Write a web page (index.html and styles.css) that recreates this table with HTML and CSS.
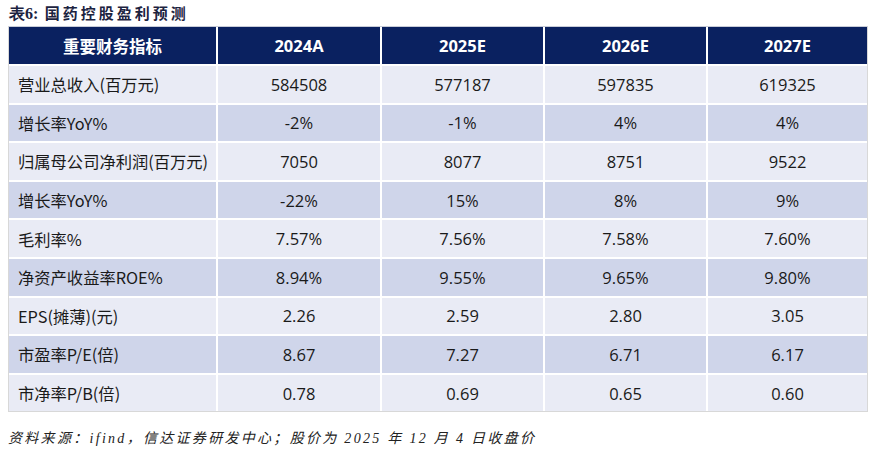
FILE: index.html
```html
<!DOCTYPE html>
<html lang="zh">
<head>
<meta charset="utf-8">
<link rel="stylesheet" href="styles.css">
</head>
<body>
<div class="title"><span class="latin">表6:</span> 国药控股盈利预测</div>
<div class="table">
  <div class="cell head">重要财务指标</div>
  <div class="cell head">2024A</div>
  <div class="cell head">2025E</div>
  <div class="cell head">2026E</div>
  <div class="cell head">2027E</div>

  <div class="cell lbl odd">营业总收入(百万元)</div>
  <div class="cell odd">584508</div><div class="cell odd">577187</div><div class="cell odd">597835</div><div class="cell odd">619325</div>

  <div class="cell lbl even">增长率YoY%</div>
  <div class="cell even">-2%</div><div class="cell even">-1%</div><div class="cell even">4%</div><div class="cell even">4%</div>

  <div class="cell lbl odd">归属母公司净利润(百万元)</div>
  <div class="cell odd">7050</div><div class="cell odd">8077</div><div class="cell odd">8751</div><div class="cell odd">9522</div>

  <div class="cell lbl even">增长率YoY%</div>
  <div class="cell even">-22%</div><div class="cell even">15%</div><div class="cell even">8%</div><div class="cell even">9%</div>

  <div class="cell lbl odd">毛利率%</div>
  <div class="cell odd">7.57%</div><div class="cell odd">7.56%</div><div class="cell odd">7.58%</div><div class="cell odd">7.60%</div>

  <div class="cell lbl even">净资产收益率ROE%</div>
  <div class="cell even">8.94%</div><div class="cell even">9.55%</div><div class="cell even">9.65%</div><div class="cell even">9.80%</div>

  <div class="cell lbl odd">EPS(摊薄)(元)</div>
  <div class="cell odd">2.26</div><div class="cell odd">2.59</div><div class="cell odd">2.80</div><div class="cell odd">3.05</div>

  <div class="cell lbl even">市盈率P/E(倍)</div>
  <div class="cell even">8.67</div><div class="cell even">7.27</div><div class="cell even">6.71</div><div class="cell even">6.17</div>

  <div class="cell lbl odd">市净率P/B(倍)</div>
  <div class="cell odd">0.78</div><div class="cell odd">0.69</div><div class="cell odd">0.65</div><div class="cell odd">0.60</div>
</div>
<div class="source">资料来源：ifind，信达证券研发中心；股价为 2025 年 12 月 4 日收盘价</div>
</body>
</html>
```

FILE: styles.css
```css
html, body {
  margin: 0;
  padding: 0;
  background: #ffffff;
}
body {
  padding: 3px 8px 0 8px;
  width: 862px;
}
.title {
  font-family: "Noto Sans CJK SC", serif;
  font-weight: bold;
  font-size: 15px;
  line-height: 20px;
  height: 23px;
  color: #1c2340;
  letter-spacing: 3px;
  padding-left: 1px;
}
.title .latin {
  font-family: "Liberation Serif", serif;
  font-size: 16px;
  letter-spacing: 0;
}
.table {
  display: grid;
  grid-template-columns: 207px 162px 161px 161px 1fr;
  grid-template-rows: 37px repeat(9, 36.6px);
  gap: 2px;
  width: 858px;
  border: 1px solid #d8d8d8;
  border-top-color: #c8ccd8;
  background: #ffffff;
}
.cell {
  display: flex;
  align-items: center;
  justify-content: center;
  font-family: "Open Sans", "Noto Sans CJK SC", sans-serif;
  font-size: 16.5px;
  color: #1a1a1a;
}
.head {
  background: #0a2160;
  color: #ffffff;
  font-weight: bold;
  font-size: 16.5px;
}
.lbl {
  justify-content: flex-start;
  padding-left: 9px;
  font-family: "Noto Sans CJK SC", "Open Sans", sans-serif;
  font-size: 16.3px;
}
.odd {
  background: #e9ebf5;
}
.even {
  background: #cfd5ea;
}
.source {
  margin-top: 15px;
  font-family: "Liberation Serif", "Noto Sans CJK SC", serif;
  font-style: italic;
  font-size: 14px;
  color: #222222;
  letter-spacing: 2.3px;
}
```
